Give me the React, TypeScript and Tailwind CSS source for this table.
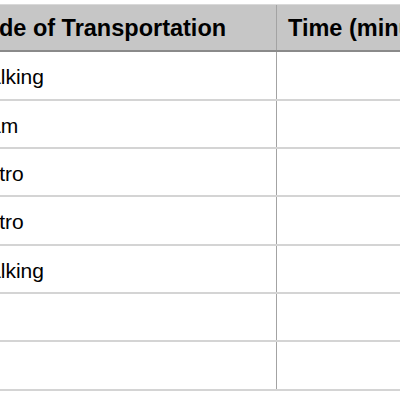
const rows = [
  { label: 'Walking', h: 'h-[49px]' },
  { label: 'Tram', h: 'h-[48px]' },
  { label: 'Metro', h: 'h-[48px]' },
  { label: 'Metro', h: 'h-[49px]' },
  { label: 'Walking', h: 'h-[48px]' },
  { label: '', h: 'h-[48px]' },
  { label: '', h: 'h-[49px]' },
];

export default function App() {
  return (
    <div className="w-[400px] h-[400px] overflow-hidden bg-white pt-[4px] font-['Liberation_Sans',Arial,sans-serif] text-black">
      <div className="ml-[-44px] w-[500px]">
        <div className="flex h-[48px] bg-[#c6c6c6] border-t border-t-[#d9d9d9] border-b-2 border-b-[#8a8a8a]">
          <div className="w-[321px] shrink-0 border-r border-r-[#a3a3a3] pl-[9px] pt-[3px] flex items-center text-[23.5px] font-bold whitespace-nowrap">
            Mode of Transportation
          </div>
          <div className="flex-1 pl-[11px] pt-[3px] flex items-center text-[23.5px] font-bold whitespace-nowrap">
            Time (minutes)
          </div>
        </div>
        {rows.map((r, i) => (
          <div key={i} className={`flex ${r.h} border-b-2 border-b-[#d4d4d4]`}>
            <div className="w-[321px] shrink-0 border-r border-r-[#a3a3a3] pl-[14px] pt-[3px] flex items-center text-[21px]">
              {r.label}
            </div>
            <div className="flex-1" />
          </div>
        ))}
      </div>
    </div>
  );
}
